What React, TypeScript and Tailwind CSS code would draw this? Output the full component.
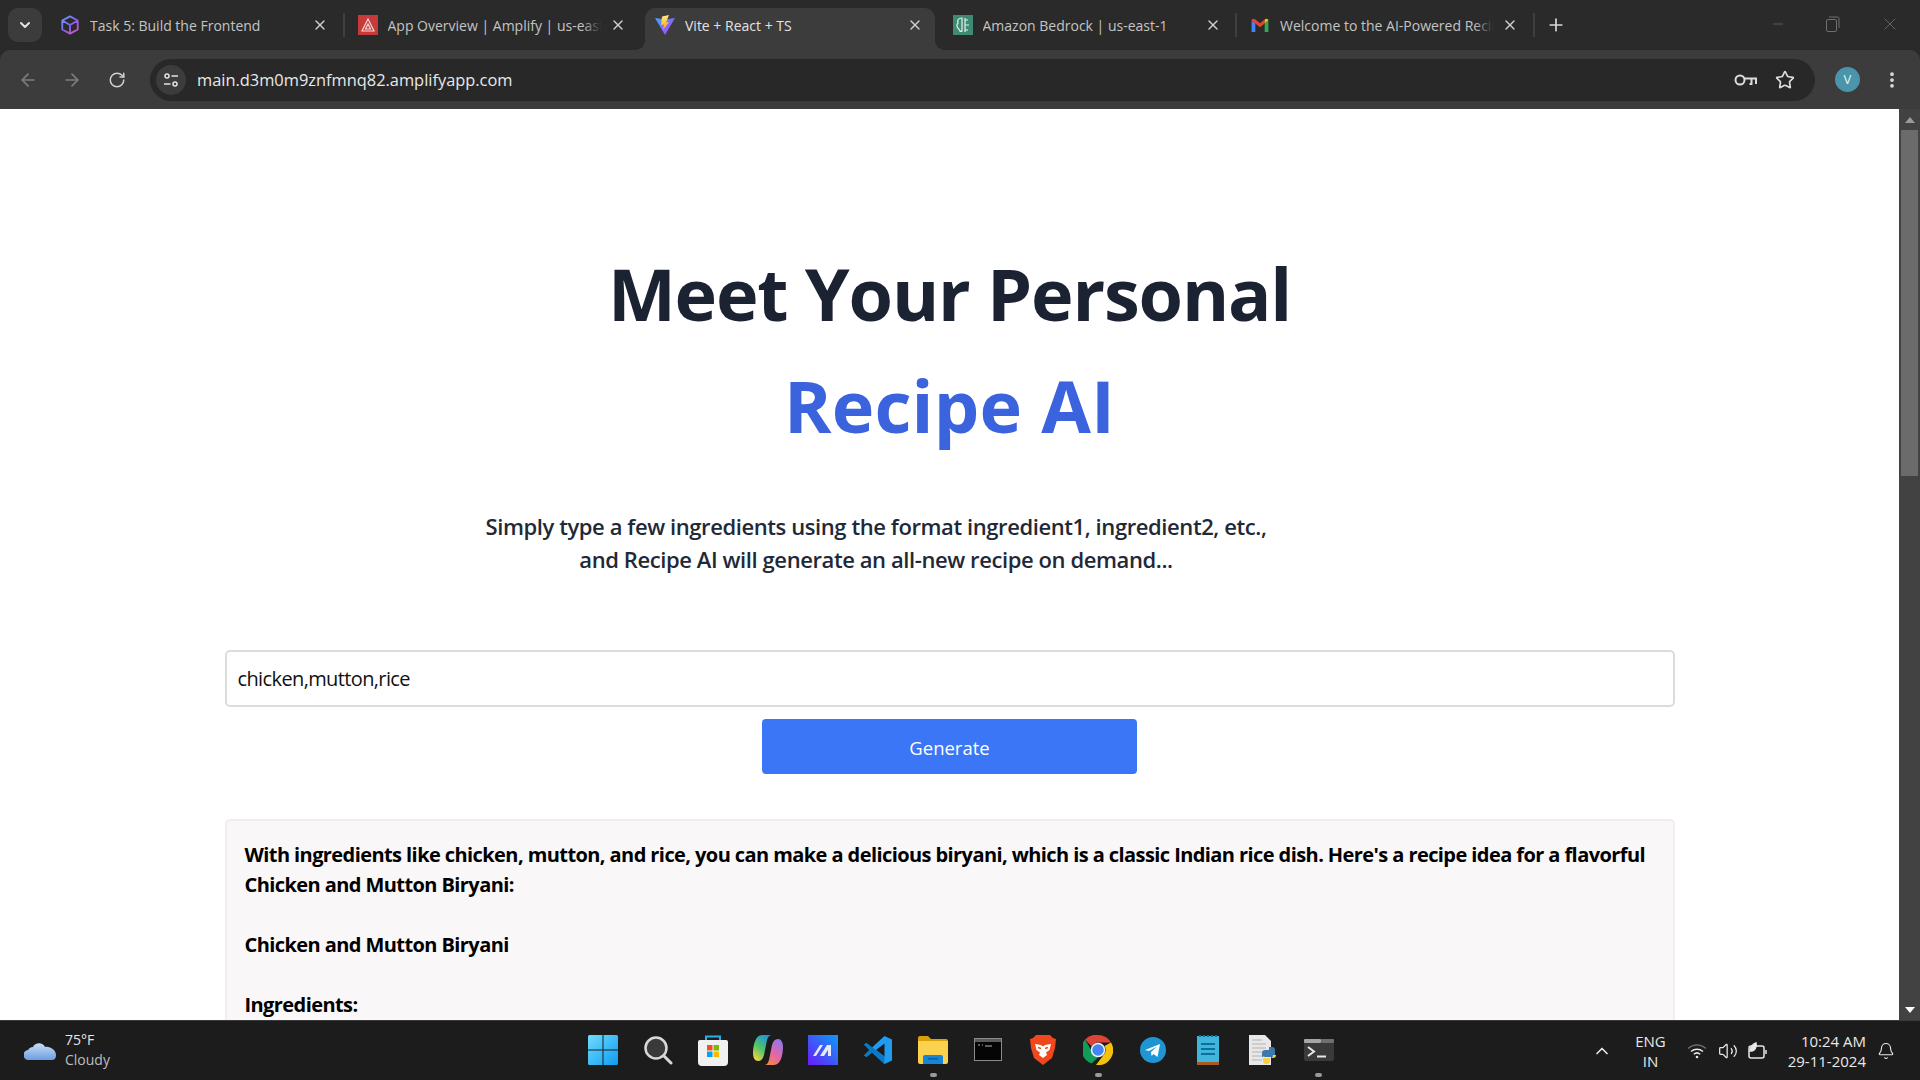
import { ChevronDown, X, Plus, ArrowLeft, ArrowRight, RotateCw, Star, EllipsisVertical, Minus, ChevronUp, Volume2, Bell } from "lucide-react";

function CubeIcon() {
  return (
    <svg width="20" height="20" viewBox="0 0 20 22" fill="none">
      <defs>
        <linearGradient id="cube" x1="0" y1="0" x2="20" y2="22" gradientUnits="userSpaceOnUse">
          <stop offset="0" stopColor="#4fb3f0" />
          <stop offset="0.5" stopColor="#8b5cf6" />
          <stop offset="1" stopColor="#e25bb0" />
        </linearGradient>
      </defs>
      <path d="M10 1.500 18.500 6v10L10 20.500 1.500 16V6z M1.500 6 10 11l8.500-5 M10 11v9.500" stroke="url(#cube)" strokeWidth="2" strokeLinejoin="round" />
    </svg>
  );
}

function AmplifyIcon() {
  return (
    <svg width="20" height="20" viewBox="0 0 20 20">
      <rect width="20" height="20" fill="#c73a3a" />
      <path d="M10 4 16 16H4z M10 9l2.500 5h-5z" fill="none" stroke="#f4d9d9" strokeWidth="1.200" />
    </svg>
  );
}

function ViteIcon() {
  return (
    <svg width="20" height="20" viewBox="0 0 20 20">
      <defs>
        <linearGradient id="vite" x1="0" y1="0" x2="1" y2="1">
          <stop offset="0" stopColor="#41a6ff" />
          <stop offset="1" stopColor="#bd34fe" />
        </linearGradient>
        <linearGradient id="bolt" x1="0" y1="0" x2="0" y2="1">
          <stop offset="0" stopColor="#ffea83" />
          <stop offset="1" stopColor="#ffa800" />
        </linearGradient>
      </defs>
      <path d="M0 3 10 4.500 20 3 10 20z" fill="url(#vite)" />
      <path d="M14 0 7 1.500 6 10l3-.5-1 5.500 6-8-3 .5z" fill="url(#bolt)" />
    </svg>
  );
}

function BedrockIcon() {
  return (
    <svg width="20" height="20" viewBox="0 0 20 20">
      <rect width="20" height="20" fill="#3f8a72" />
      <path d="M9 3C5 3 4 6 5 8c-2 2-1 5 1 6 0 2 2 3 3 2zM12 5h3M12 10h4M12 15h3M12 3v14" fill="none" stroke="#e4f2ec" strokeWidth="1.200" />
    </svg>
  );
}

function GmailIcon() {
  return (
    <svg width="18" height="14" viewBox="0 0 18 15">
      <path d="M0 2.500V15h4V6z" fill="#4285f4" />
      <path d="M14 6v9h4V2.500z" fill="#34a853" />
      <path d="M0 2.500 4 6l5 4 5-4V1.500L9 5.500 4 1.500C2 0 0 1 0 2.500z" fill="#ea4335" />
      <path d="M14 1.500V6l4-3.500C18 1 16 0 14 1.500z" fill="#fbbc04" />
    </svg>
  );
}

function Tab({ icon, title, active, fade, sep }: { icon: React.ReactNode; title: string; active?: boolean; fade?: boolean; sep?: boolean }) {
  return (
    <div className="flex shrink-0 items-center">
      <div className={`relative flex h-[42px] w-[290px] shrink-0 items-center pb-2 pl-[10px] pr-[12px] ${active ? "rounded-t-[10px] bg-[#3c3c3c]" : ""}`}>
        {active && (
          <>
            <div className="absolute bottom-0 left-[-10px] h-[10px] w-[10px] bg-[radial-gradient(circle_at_0_0,transparent_10px,#3c3c3c_10px)]" />
            <div className="absolute bottom-0 right-[-10px] h-[10px] w-[10px] bg-[radial-gradient(circle_at_100%_0,transparent_10px,#3c3c3c_10px)]" />
          </>
        )}
        <div className="flex h-5 w-5 shrink-0 items-center justify-center">{icon}</div>
        <span className={`ml-[10px] min-w-0 flex-1 overflow-hidden whitespace-nowrap text-[14px] ${active ? "text-[#e3e3e3]" : "text-[#c4c4c4]"}`}>
          {title}
        </span>
        {fade && <div className="absolute right-[28px] top-0 h-[34px] w-7 bg-gradient-to-r from-transparent to-[#2a2a2a] to-70%" />}
        <X size={16} strokeWidth={2} className="ml-1 shrink-0 text-[#d0d0d0]" />
      </div>
      <div className="mb-2 flex w-[7.500px] justify-center">{sep && <div className="h-6 w-[2px] bg-[#3f3f3f]" />}</div>
    </div>
  );
}

function SiteInfoGlyph() {
  return (
    <svg width="16" height="16" viewBox="0 0 16 16" fill="none" stroke="#e3e3e3" strokeWidth="1.500">
      <circle cx="4" cy="4" r="2" />
      <path d="M8.500 4H15" />
      <path d="M1 12h6.500" />
      <circle cx="12" cy="12" r="2" />
    </svg>
  );
}

function KeyGlyph() {
  return (
    <svg width="23" height="14" viewBox="0 0 23 14" fill="none" stroke="#dcdcdc" strokeWidth="2">
      <circle cx="6" cy="7" r="4.500" />
      <path d="M10.500 5.500H22V11M17.500 6v5h-2" />
    </svg>
  );
}

function BrowserChrome() {
  return (
    <div className="shrink-0 bg-[#2a2a2a]">
      <div className="flex h-[50px] items-end pl-2">
        <div className="mb-2 flex h-[34px] w-[34px] shrink-0 items-center justify-center rounded-[10px] bg-[#3c3c3c]">
          <ChevronDown size={16} strokeWidth={3} className="text-[#e3e3e3]" />
        </div>
        <div className="ml-2 flex items-center">
          <Tab icon={<CubeIcon />} title="Task 5: Build the Frontend" sep />
          <Tab icon={<AmplifyIcon />} title="App Overview | Amplify | us-east-1" fade />
          <Tab icon={<ViteIcon />} title="Vite + React + TS" active />
          <Tab icon={<BedrockIcon />} title="Amazon Bedrock | us-east-1" sep />
          <Tab icon={<GmailIcon />} title="Welcome to the AI-Powered Recipe" fade sep />
          <Plus size={20} strokeWidth={2} className="mb-2 ml-2 shrink-0 text-[#d8d8d8]" />
        </div>
        <div className="ml-auto flex h-full items-center gap-[40px] pb-[2px] pr-5 text-[#6f6f6f]">
          <Minus size={16} strokeWidth={1} />
          <svg width="14" height="16" viewBox="0 0 14 16" fill="none" stroke="currentColor">
            <rect x="0.500" y="3.500" width="10" height="12" rx="1.500" />
            <path d="M3 1h8.500A1.500 1.500 0 0 1 13 2.500V12" />
          </svg>
          <X size={20} strokeWidth={1} />
        </div>
      </div>
      <div className="flex h-[59px] items-center rounded-t-[10px] bg-[#3c3c3c]">
        <div className="flex w-[150px] shrink-0 items-center gap-6 pl-[18px] text-[#7e7e7e]">
          <ArrowLeft size={20} strokeWidth={2} />
          <ArrowRight size={20} strokeWidth={2} />
          <RotateCw size={18} strokeWidth={2} className="ml-[2px] text-[#d0d0d0]" />
        </div>
        <div className="flex h-[42px] flex-1 items-center rounded-full bg-[#282828] pl-[6px] pr-[20px]">
          <div className="flex h-[30px] w-[30px] items-center justify-center rounded-full bg-[#3c3c3c]">
            <SiteInfoGlyph />
          </div>
          <span className="ml-[11px] pt-[1px] text-[16.400px] text-[#e8e8e8]">main.d3m0m9znfmnq82.amplifyapp.com</span>
          <div className="ml-auto">
            <KeyGlyph />
          </div>
          <Star size={20} strokeWidth={2} className="ml-[18px] text-[#dcdcdc]" />
        </div>
        <div className="ml-[20px] flex h-[25px] w-[25px] items-center justify-center rounded-full bg-[#4a95aa] text-[13px] text-[#e8f2f4]">V</div>
        <EllipsisVertical size={20} strokeWidth={2.500} className="ml-[22px] mr-[18px] text-[#dcdcdc]" />
      </div>
    </div>
  );
}

function Scrollbar() {
  return (
    <div className="flex w-[21px] shrink-0 flex-col items-center bg-[#424242]">
      <div className="mt-[8px] h-0 w-0 border-x-[5px] border-b-[6px] border-x-transparent border-b-[#9a9a9a]" />
      <div className="mt-[7px] h-[346px] w-[17px] bg-[#6b6b6b]" />
      <div className="mt-auto mb-[7px] h-0 w-0 border-x-[5px] border-t-[6px] border-x-transparent border-t-white" />
    </div>
  );
}

function RecipePage() {
  return (
    <main className="flex min-w-0 flex-1 flex-col items-center overflow-hidden bg-white pt-[128px]">
      <h1 className="text-[72px] font-bold leading-[112px] tracking-[-1.200px] text-[#1b2333]">Meet Your Personal</h1>
      <h2 className="text-[72px] font-bold leading-[112px] tracking-[0.200px] text-[#3b63dd]">Recipe AI</h2>
      <p className="mr-[147px] mt-[49px] text-center text-[22px] font-semibold leading-[33px] tracking-[-0.410px] text-[#1f2937]">
        Simply type a few ingredients using the format ingredient1, ingredient2, etc.,
        <br />
        and Recipe AI will generate an all-new recipe on demand...
      </p>
      <div className="mt-[74px] flex h-[57px] w-[1450px] shrink-0 items-center rounded-[5px] border-2 border-[#dcdcdc] px-[11px] text-[20px] tracking-[-0.620px] text-[#111111]">
        chicken,mutton,rice
      </div>
      <button className="mt-3 h-[55px] w-[375px] shrink-0 rounded-[4px] bg-[#3b76f6] pt-[3px] text-[18.500px] text-white">Generate</button>
      <section className="mt-[45px] w-[1450px] shrink-0 rounded-t-[5px] border-2 border-b-0 border-[#f0eeef] bg-[#f9f7f8] px-[17px] pt-[19px] text-[20px] font-bold leading-[30px] tracking-[-0.580px] text-black">
        <p className="pl-[1px]">
          With ingredients like chicken, mutton, and rice, you can make a delicious biryani, which is a classic Indian rice dish. Here's a recipe idea for a flavorful Chicken and Mutton Biryani:
        </p>
        <p className="mt-[30px] pl-[1px]">Chicken and Mutton Biryani</p>
        <p className="mt-[30px] pl-[1px]">Ingredients:</p>
      </section>
    </main>
  );
}

function WindowsLogo() {
  return (
    <svg width="30" height="30" viewBox="0 0 30 30">
      <defs>
        <linearGradient id="win" x1="0" y1="0" x2="1" y2="1">
          <stop offset="0" stopColor="#6fdcff" />
          <stop offset="1" stopColor="#0f9bf0" />
        </linearGradient>
      </defs>
      <path d="M0 1.500A1.500 1.500 0 0 1 1.500 0h13v14.500H0zM15.500 0h13A1.500 1.500 0 0 1 30 1.500v13H15.500zM0 15.500h14.500V30h-13A1.500 1.500 0 0 1 0 28.500zM15.500 15.500H30v13a1.500 1.500 0 0 1-1.500 1.500h-13z" fill="url(#win)" />
    </svg>
  );
}

function SearchGlyph() {
  return (
    <svg width="30" height="30" viewBox="0 0 30 30" fill="none">
      <circle cx="13" cy="13" r="10.500" fill="#3a3a3a" stroke="#d8d8d8" strokeWidth="2.500" />
      <path d="M21 21l7 7" stroke="#d8d8d8" strokeWidth="3" strokeLinecap="round" />
    </svg>
  );
}

function StoreIcon() {
  return (
    <svg width="30" height="32" viewBox="0 0 30 32">
      <path d="M8 7V2.500h14V7" fill="none" stroke="#27b0e8" strokeWidth="2" />
      <path d="M0 8a2 2 0 0 1 2-2h26a2 2 0 0 1 2 2v20a4 4 0 0 1-4 4H4a4 4 0 0 1-4-4z" fill="#f1f1f1" />
      <rect x="9" y="11" width="5.500" height="5.500" fill="#f25022" />
      <rect x="15.500" y="11" width="5.500" height="5.500" fill="#7fba00" />
      <rect x="9" y="17.500" width="5.500" height="5.500" fill="#00a4ef" />
      <rect x="15.500" y="17.500" width="5.500" height="5.500" fill="#ffb900" />
    </svg>
  );
}

function CopilotIcon() {
  return (
    <svg width="30" height="30" viewBox="0 0 30 30">
      <defs>
        <linearGradient id="cp1" x1="0.800" y1="0" x2="0.200" y2="1">
          <stop offset="0" stopColor="#1d8fe8" />
          <stop offset="0.550" stopColor="#4ec46a" />
          <stop offset="1" stopColor="#f2d640" />
        </linearGradient>
        <linearGradient id="cp2" x1="0.800" y1="0" x2="0.200" y2="1">
          <stop offset="0" stopColor="#8f78ea" />
          <stop offset="0.550" stopColor="#e566a8" />
          <stop offset="1" stopColor="#f58a3c" />
        </linearGradient>
      </defs>
      <path d="M9 0h10c-3 0-4 2-5 5l-3 15c-1 4-3 6-6 6-3 0-5-3-5-8C0 9 3 0 9 0z" fill="url(#cp1)" />
      <path d="M21 30H11c3 0 4-2 5-5l3-15c1-4 3-6 6-6 3 0 5 3 5 8 0 9-3 18-9 18z" fill="url(#cp2)" />
    </svg>
  );
}

function CursiveAppIcon() {
  return (
    <svg width="30" height="30" viewBox="0 0 30 30">
      <defs>
        <linearGradient id="ma" x1="1" y1="0" x2="0" y2="1">
          <stop offset="0" stopColor="#0d9bf5" />
          <stop offset="1" stopColor="#6a1bfa" />
        </linearGradient>
      </defs>
      <rect width="30" height="30" fill="url(#ma)" />
      <path d="M5 21 12 10h3L8 21zM12 21l7-11h4v11h-3v-6l-4 6z" fill="#e6e8ff" />
    </svg>
  );
}

function VsCodeIcon() {
  return (
    <svg width="30" height="30" viewBox="0 0 30 30">
      <path d="M21.500 1 29 4.500v21L21.500 29 9 17.500 3.500 22 1 20.500 6.500 15 1 9.500 3.500 8 9 12.500z M21.500 8.500 13 15l8.500 6.500z" fill="#1f9cf0" fillRule="evenodd" />
      <path d="M1 9.500 3.500 8 21.500 21.500V29L9 17.500 3.500 22 1 20.500 6.500 15z" fill="#0a78c2" />
    </svg>
  );
}

function ExplorerIcon() {
  return (
    <svg width="30" height="28" viewBox="0 0 30 28">
      <path d="M0 2a2 2 0 0 1 2-2h8l3 3h15a2 2 0 0 1 2 2v4H0z" fill="#d9a20c" />
      <path d="M0 5h30v21a2 2 0 0 1-2 2H2a2 2 0 0 1-2-2z" fill="#fbd24e" />
      <path d="M5 21a2 2 0 0 1 2-2h16a2 2 0 0 1 2 2v7H5z" fill="#1585d8" />
      <rect x="10" y="22" width="10" height="1.500" fill="#0b5c9e" />
    </svg>
  );
}

function ConsoleIcon() {
  return (
    <svg width="28" height="23" viewBox="0 0 28 23">
      <rect x="0.500" y="0.500" width="27" height="22" fill="#050505" stroke="#8a8a8a" />
      <rect x="1" y="1" width="26" height="3" fill="#5b5b5b" />
      <path d="M4 7h2M8 7h1M11 8h7" stroke="#b8b8b8" strokeWidth="1" />
    </svg>
  );
}

function BraveIcon() {
  return (
    <svg width="26" height="30" viewBox="0 0 26 30">
      <path d="M6 0h14l3 3 3 1-1 9-3 10-9 7-9-7L1 13 0 4l3-1z" fill="#f1471d" />
      <path d="M5 9l6 1 2 1.500L15 10l6-1-1.500 6-3.500 2.500 1 2.500-4 3-4-3 1-2.500L6.500 15z" fill="#fff" />
      <path d="M8 12.500l3 1M18 12.500l-3 1" stroke="#f1471d" strokeWidth="1.500" />
    </svg>
  );
}

function ChromeIcon() {
  return (
    <svg width="30" height="30" viewBox="0 0 30 30">
      <path d="M15 0a15 15 0 0 1 13 7.500H15a7.500 7.500 0 0 0-6.500 3.750L2 4.600A15 15 0 0 1 15 0z" fill="#db4437" />
      <path d="M2 4.600l6.500 11.150A7.500 7.500 0 0 0 15 22.500L8.500 28.500A15 15 0 0 1 2 4.600z" fill="#0f9d58" />
      <path d="M28 7.500A15 15 0 0 1 13 30l8.500-11.250A7.500 7.500 0 0 0 21.500 11z" fill="#f4c20d" />
      <circle cx="15" cy="15" r="6.500" fill="#4285f4" stroke="#f2f2f2" strokeWidth="1.500" />
    </svg>
  );
}

function TelegramIcon() {
  return (
    <svg width="26" height="26" viewBox="0 0 26 26">
      <circle cx="13" cy="13" r="13" fill="#1f96d3" />
      <path d="M5 13 20 7l-2.500 13-4-3-2 2-.5-4 6-5.500-8 4.500z" fill="#fff" />
    </svg>
  );
}

function NotepadIcon() {
  return (
    <svg width="22" height="30" viewBox="0 0 22 30">
      <rect y="1" width="22" height="27" fill="#41b6dc" />
      <rect y="27" width="22" height="3" fill="#a8591c" />
      <path d="M2 1h18" stroke="#0f6f9c" strokeWidth="2" strokeDasharray="2 2" />
      <path d="M4 9h14M4 14h14M4 19h14" stroke="#0f6f9c" strokeWidth="2" />
    </svg>
  );
}

function PyFileIcon() {
  return (
    <svg width="30" height="30" viewBox="0 0 30 30">
      <path d="M1 0h16l6 6v24H1z" fill="#e8e8e8" />
      <path d="M4 5h10M4 9h14M4 13h14M4 17h10M4 21h10M4 25h10" stroke="#b2b2b2" />
      <path d="M14 18a3 3 0 0 1 3-3h4v-3h3a3 3 0 0 1 3 3v4a3 3 0 0 1-3 3h-7a3 3 0 0 0-3 0z" fill="#3b79ad" />
      <path d="M28 20a3 3 0 0 1-3 3h-3v3a3 3 0 0 1-3 3h-1a3 3 0 0 1-3-3v-3h7a3 3 0 0 0 3-3z" fill="#fbcf3f" />
    </svg>
  );
}

function TerminalIcon() {
  return (
    <svg width="30" height="22" viewBox="0 0 30 22">
      <rect width="30" height="22" rx="2" fill="#3a3a3a" />
      <rect width="17" height="4" rx="1" fill="#a6a6a6" />
      <rect x="17" width="13" height="4" rx="1" fill="#6f6f6f" />
      <path d="M4 8l6 4.500L4 17" fill="none" stroke="#e8e8e8" strokeWidth="2" />
      <path d="M13 17.500h9" stroke="#e8e8e8" strokeWidth="2" />
    </svg>
  );
}

function WifiGlyph() {
  return (
    <svg width="20" height="16" viewBox="0 0 20 16" fill="none" strokeWidth="1.500">
      <path d="M1 5.500a13 13 0 0 1 18 0" stroke="#6a6a6a" />
      <path d="M4 8.500a9 9 0 0 1 12 0" stroke="#e8e8e8" />
      <path d="M6.800 11.300a4.800 4.800 0 0 1 6.400 0" stroke="#e8e8e8" />
      <circle cx="10" cy="14" r="1.300" fill="#e8e8e8" />
    </svg>
  );
}

function TaskIcon({ children, running }: { children: React.ReactNode; running?: boolean }) {
  return (
    <div className="relative flex h-[59px] w-[55.080px] shrink-0 items-center justify-center pb-[2px]">
      {children}
      {running && <div className="absolute bottom-[3px] h-[4px] w-[7px] rounded-full bg-[#9a9a9a]" />}
    </div>
  );
}

function Taskbar() {
  return (
    <footer className="flex h-[60px] shrink-0 items-center border-t border-[#3b3b3b] bg-[#1c1c1c] text-[15px] leading-[20px] text-[#e8e8e8]">
      <div className="flex w-[575px] shrink-0 items-center pb-[2px] pl-[24px] text-[14px]">
        <svg width="32" height="20" viewBox="0 0 32 20">
          <defs>
            <linearGradient id="cloud" x1="0" y1="0" x2="0" y2="1">
              <stop offset="0" stopColor="#c9def8" />
              <stop offset="1" stopColor="#6d9de0" />
            </linearGradient>
          </defs>
          <path d="M5 20a5 5 0 0 1-1-10c1-2 3-3 5-3 2-5 10-5 12 0 5-1 11 3 11 8s-3 5-6 5z" fill="url(#cloud)" />
        </svg>
        <div className="ml-[9px]">
          <div className="leading-[20px]">75°F</div>
          <div className="leading-[20px] text-[#bdbdbd]">Cloudy</div>
        </div>
      </div>
      <div className="flex items-center">
        <TaskIcon><WindowsLogo /></TaskIcon>
        <TaskIcon><SearchGlyph /></TaskIcon>
        <TaskIcon><StoreIcon /></TaskIcon>
        <TaskIcon><CopilotIcon /></TaskIcon>
        <TaskIcon><CursiveAppIcon /></TaskIcon>
        <TaskIcon><VsCodeIcon /></TaskIcon>
        <TaskIcon running><ExplorerIcon /></TaskIcon>
        <TaskIcon><ConsoleIcon /></TaskIcon>
        <TaskIcon><BraveIcon /></TaskIcon>
        <TaskIcon running><ChromeIcon /></TaskIcon>
        <TaskIcon><TelegramIcon /></TaskIcon>
        <TaskIcon><NotepadIcon /></TaskIcon>
        <TaskIcon><PyFileIcon /></TaskIcon>
        <TaskIcon running><TerminalIcon /></TaskIcon>
      </div>
      <div className="ml-auto flex items-center pr-[25px]">
        <ChevronUp size={20} strokeWidth={2} className="mr-[23px]" />
        <div className="mr-[21px] text-center leading-[20px]">
          <div>ENG</div>
          <div>IN</div>
        </div>
        <div className="mr-[11px]">
          <WifiGlyph />
        </div>
        <Volume2 size={20} strokeWidth={1.500} className="mr-[10px]" />
        <svg width="20" height="18" viewBox="0 0 20 18" fill="none" stroke="currentColor" strokeWidth="1.500" className="mr-[20px]">
          <rect x="1" y="4" width="15" height="12" rx="2" />
          <path d="M18 8v4" />
          <path d="M2 9c0-4 3-7 6-8 1 4-1 8-6 8z" fill="currentColor" />
        </svg>
        <div className="mr-[11px] text-right leading-[20px]">
          <div>10:24 AM</div>
          <div>29-11-2024</div>
        </div>
        <Bell size={18} strokeWidth={1.500} />
      </div>
    </footer>
  );
}

export default function App() {
  return (
    <div className="flex h-[1080px] w-[1920px] flex-col overflow-hidden font-['Open_Sans',sans-serif]">
      <BrowserChrome />
      <div className="flex min-h-0 flex-1">
        <RecipePage />
        <Scrollbar />
      </div>
      <Taskbar />
    </div>
  );
}
